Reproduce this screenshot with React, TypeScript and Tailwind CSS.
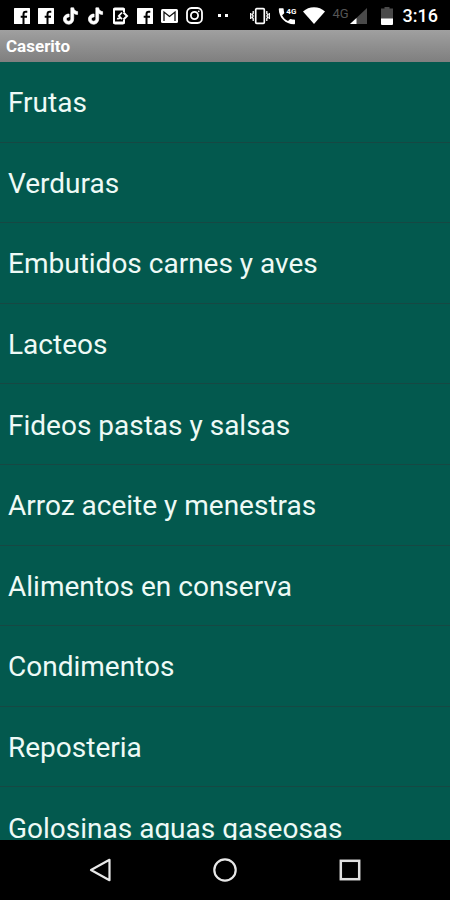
import * as React from "react";

const CATEGORIES: string[] = [
  "Frutas",
  "Verduras",
  "Embutidos carnes y aves",
  "Lacteos",
  "Fideos pastas y salsas",
  "Arroz aceite y menestras",
  "Alimentos en conserva",
  "Condimentos",
  "Reposteria",
  "Golosinas aguas gaseosas",
];

function FacebookIcon(): React.JSX.Element {
  return (
    <svg viewBox="0 0 16 16" className="h-4 w-4 shrink-0" aria-hidden="true">
      <rect width="16" height="16" rx="0.500" fill="#fff" />
      <path d="M9.500 16V6.200c0-1.600.8-2.400 2.200-2.400h1.600M6.700 8.700h6.300" fill="none" stroke="#000" strokeWidth="2" />
    </svg>
  );
}

function TikTokIcon(): React.JSX.Element {
  return (
    <svg viewBox="0 0 24 24" className="h-[18px] w-[17px] shrink-0" aria-hidden="true">
      <path
        fill="#fff"
        stroke="#fff"
        strokeWidth="1"
        d="M12.500.5h4c.2 2.900 2.300 5.100 5.500 5.300v4c-2 0-3.900-.6-5.500-1.700v8c0 4.300-3.200 7.400-7.300 7.400S2 20.400 2 16.400s3.400-7.500 8-7.200v4.200c-2.200-.4-3.900 1.100-3.900 3s1.400 3 3.100 3c1.900 0 3.300-1.400 3.300-3.500z"
      />
    </svg>
  );
}

function PhoneSyncIcon(): React.JSX.Element {
  return (
    <svg viewBox="0 0 17 18" className="h-[18px] w-[17px] shrink-0" aria-hidden="true" fill="none" stroke="#fff">
      <path strokeWidth="2" strokeLinejoin="round" d="M12 5V2H2v14h10v-3.500" />
      <path strokeWidth="2.800" strokeLinecap="round" d="M3 2h8M3 16h8" />
      <path strokeWidth="1.800" d="M5 11.500c1.200.4 2.300.2 3.200-.8M10 5.500 6.800 9l3.200 3.200" />
      <path strokeWidth="2" d="m11.500 5.500 3.500 3.500-3.500 3.500" />
    </svg>
  );
}

function MailIcon(): React.JSX.Element {
  return (
    <svg viewBox="0 0 17 14" className="h-[14px] w-[17px] shrink-0" aria-hidden="true">
      <rect width="17" height="14" rx="1.500" fill="#fff" />
      <path d="M3 12V3l5.500 4.500L14 3v9" fill="none" stroke="#111" strokeWidth="1.300" />
    </svg>
  );
}

function InstagramIcon(): React.JSX.Element {
  return (
    <svg viewBox="0 0 17 17" className="h-[17px] w-[17px] shrink-0" aria-hidden="true" fill="none" stroke="#fff" strokeWidth="1.800">
      <rect x="1" y="1" width="15" height="15" rx="4.500" />
      <circle cx="8.500" cy="8.500" r="3.600" />
      <circle cx="12.700" cy="4.300" r="0.900" fill="#fff" stroke="none" />
    </svg>
  );
}

function VibrateIcon(): React.JSX.Element {
  return (
    <svg viewBox="0 0 20 18" className="h-[18px] w-5 shrink-0" aria-hidden="true" fill="none" stroke="#fff">
      <rect x="5.700" y="1.700" width="8.600" height="14.600" rx="1" strokeWidth="1.700" />
      <path strokeWidth="1.300" d="M3.200 4v2.500l-1 1 1 1.500-1 1.500 1 1V14M.7 6v6M16.800 4v2.500l1 1-1 1.500 1 1.500-1 1V14M19.300 6v6" />
    </svg>
  );
}

function CallIcon(): React.JSX.Element {
  return (
    <div className="relative h-[18px] w-[18px] shrink-0">
      <svg viewBox="0 0 18 18" className="h-full w-full" aria-hidden="true">
        <path
          fill="#fff"
          d="M4.100 8.200c1.300 2.600 3.300 4.600 5.900 5.900l1.900-1.900c.3-.3.700-.4 1-.2 1.100.4 2 .5 3.100.5.600 0 1 .4 1 1v2.800c0 .6-.4 1-1 1C7.500 17.300.8 10.600.8 2.300c0-.6.4-1 1-1h2.900c.6 0 1 .4 1 1 0 1.100.2 2.200.5 3.200.1.300 0 .7-.2 1z"
        />
      </svg>
      <span className="absolute top-0 right-0 text-[8px] leading-[10px] font-bold">4G</span>
    </div>
  );
}

function StatusBar(): React.JSX.Element {
  return (
    <div className="flex h-[30px] shrink-0 items-center bg-black pt-px pr-3 pl-[14px] text-white">
      <div className="flex items-center gap-2">
        <FacebookIcon />
        <FacebookIcon />
        <TikTokIcon />
        <TikTokIcon />
        <PhoneSyncIcon />
        <FacebookIcon />
        <MailIcon />
        <InstagramIcon />
      </div>
      <div className="ml-[15px] flex gap-1">
        <span className="h-[3px] w-[3px] bg-white" />
        <span className="h-[3px] w-[3px] bg-white" />
      </div>

      <div className="ml-auto flex items-center">
        <VibrateIcon />
        <div className="ml-2">
          <CallIcon />
        </div>
        <svg viewBox="0 0 22 17" className="ml-[7px] h-[17px] w-[22px] shrink-0" aria-hidden="true">
          <path fill="#fff" d="M0 4.500C3 1.800 6.800.3 11 .3s8 1.500 11 4.200L11 17z" />
        </svg>
        <span className="ml-[7px] -mt-1 text-[13px] leading-4 text-[#555]">4G</span>
        <svg viewBox="0 0 17 16" className="ml-px h-4 w-[17px] shrink-0" aria-hidden="true">
          <path fill="#4a4a4a" d="M17 0v16H0z" />
          <path fill="#fff" d="M6.500 9.900V16H0z" />
        </svg>
        <svg viewBox="0 0 12 18" className="ml-[14px] h-[18px] w-3 shrink-0" aria-hidden="true">
          <path fill="#4a4a4a" d="M3.500 0h5v1.500H12V12H0V1.500h3.500z" />
          <path fill="#fff" d="M0 11.500h12V17a1 1 0 0 1-1 1H1a1 1 0 0 1-1-1z" />
        </svg>
        <span className="ml-[10px] text-[18px] leading-6 font-medium">3:16</span>
      </div>
    </div>
  );
}

function NavigationBar(): React.JSX.Element {
  return (
    <nav className="flex h-[60px] shrink-0 items-center justify-center gap-[101px] bg-black">
      <button type="button" aria-label="Atrás" className="h-6 w-6">
        <svg viewBox="0 0 24 24" className="h-6 w-6" fill="none" stroke="#e8e8e8" strokeWidth="2.200" strokeLinejoin="round">
          <path d="M21.500 1.800v20.400L3 12z" />
        </svg>
      </button>
      <button type="button" aria-label="Inicio" className="h-6 w-6">
        <svg viewBox="0 0 24 24" className="h-6 w-6" fill="none" stroke="#e8e8e8" strokeWidth="2.200">
          <circle cx="12" cy="12" r="10.700" />
        </svg>
      </button>
      <button type="button" aria-label="Recientes" className="h-6 w-6">
        <svg viewBox="0 0 24 24" className="h-6 w-6" fill="none" stroke="#e0e0e0" strokeWidth="2.500">
          <rect x="2.800" y="2.800" width="18.400" height="18.400" />
        </svg>
      </button>
    </nav>
  );
}

export default function App(): React.JSX.Element {
  return (
    <div className="flex h-dvh flex-col overflow-hidden bg-black font-['Roboto',sans-serif]">
      <StatusBar />
      <header className="flex h-8 shrink-0 items-center bg-linear-to-b from-[#a0a0a0] to-[#7f7f7f] px-[6px]">
        <h1 className="text-[17px] leading-6 font-bold text-white">Caserito</h1>
      </header>

      {/* The last category runs on under the navigation bar */}
      <main className="flex min-h-0 flex-1 flex-col overflow-hidden bg-[#03594e]">
        <ul className="-mb-7 flex flex-1 flex-col">
          {CATEGORIES.map((category) => (
            <li key={category} className="flex flex-1 border-b border-[#164843]">
              <button type="button" className="w-full px-2 pt-[3px] text-left text-[28px] leading-8 text-[#eefaf6]">
                {category}
              </button>
            </li>
          ))}
        </ul>
      </main>
      <NavigationBar />
    </div>
  );
}
